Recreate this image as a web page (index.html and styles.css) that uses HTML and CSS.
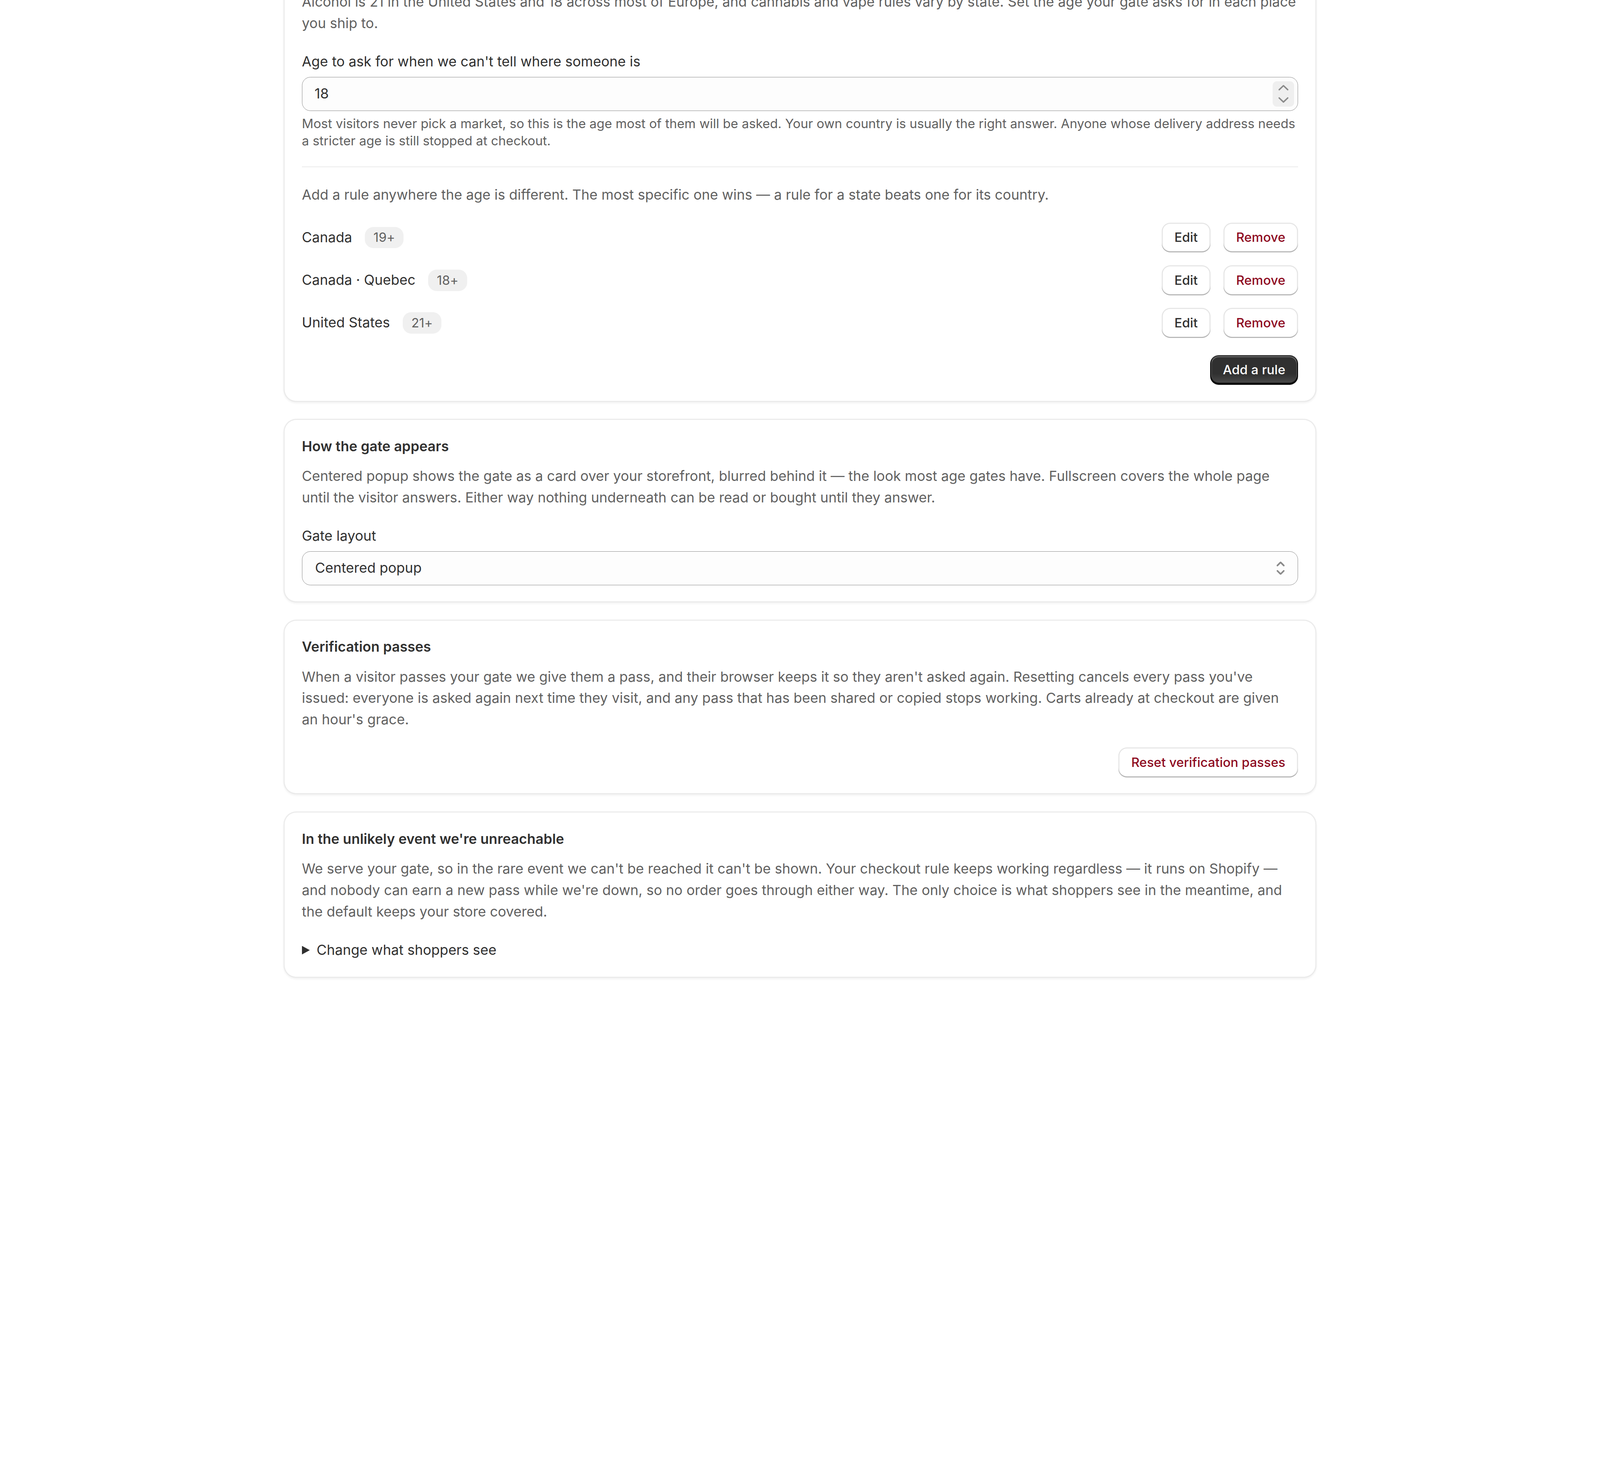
FILE: index.html
```html
<!DOCTYPE html>
<html lang="en">
<head>
<meta charset="UTF-8">
<meta name="viewport" content="width=device-width, initial-scale=1.0">
<title>Age gate settings</title>
<link rel="stylesheet" href="styles.css">
</head>
<body>

<div class="page">

  <div class="card">
    <p class="subdued">Alcohol is 21 in the United States and 18 across most of Europe, and cannabis and vape rules vary by state. Set the age your gate asks for in each place you ship to.</p>

    <div class="field">
      <label for="fallbackAge">Age to ask for when we can't tell where someone is</label>
      <div class="number-field">
        <input type="text" id="fallbackAge" value="18">
        <div class="spinner">
          <span class="spin-btn">
            <svg width="10" height="6" viewBox="0 0 10 6"><polyline points="1,5 5,1.2 9,5" fill="none" stroke="#8a8a8a" stroke-width="1.3" stroke-linecap="round" stroke-linejoin="round"/></svg>
          </span>
          <span class="spin-btn">
            <svg width="10" height="6" viewBox="0 0 10 6"><polyline points="1,1 5,4.8 9,1" fill="none" stroke="#8a8a8a" stroke-width="1.3" stroke-linecap="round" stroke-linejoin="round"/></svg>
          </span>
        </div>
      </div>
      <p class="help">Most visitors never pick a market, so this is the age most of them will be asked. Your own country is usually the right answer. Anyone whose delivery address needs a stricter age is still stopped at checkout.</p>
    </div>

    <hr class="divider">

    <p class="subdued">Add a rule anywhere the age is different. The most specific one wins — a rule for a state beats one for its country.</p>

    <div class="rules">
      <div class="rule">
        <div class="rule-name">
          <span>Canada</span>
          <span class="badge">19+</span>
        </div>
        <div class="rule-actions">
          <button class="btn">Edit</button>
          <button class="btn btn-critical">Remove</button>
        </div>
      </div>
      <div class="rule">
        <div class="rule-name">
          <span>Canada · Quebec</span>
          <span class="badge">18+</span>
        </div>
        <div class="rule-actions">
          <button class="btn">Edit</button>
          <button class="btn btn-critical">Remove</button>
        </div>
      </div>
      <div class="rule">
        <div class="rule-name">
          <span>United States</span>
          <span class="badge">21+</span>
        </div>
        <div class="rule-actions">
          <button class="btn">Edit</button>
          <button class="btn btn-critical">Remove</button>
        </div>
      </div>
    </div>

    <div class="actions">
      <button class="btn btn-primary">Add a rule</button>
    </div>
  </div>

  <div class="card">
    <div class="section-head">
      <h2>How the gate appears</h2>
      <p class="subdued">Centered popup shows the gate as a card over your storefront, blurred behind it — the look most age gates have. Fullscreen covers the whole page until the visitor answers. Either way nothing underneath can be read or bought until they answer.</p>
    </div>

    <div class="field">
      <label for="gateLayout">Gate layout</label>
      <div class="select">
        <select id="gateLayout">
          <option>Centered popup</option>
          <option>Fullscreen</option>
        </select>
        <svg class="select-icon" width="20" height="20" viewBox="0 0 20 20"><path fill="#8a8a8a" d="M10.884 4.323a1.25 1.25 0 0 0-1.768 0l-2.646 2.647a.75.75 0 0 0 1.06 1.06l2.47-2.47 2.47 2.47a.75.75 0 1 0 1.06-1.06l-2.646-2.647Z"/><path fill="#8a8a8a" d="m13.53 13.03-2.646 2.647a1.25 1.25 0 0 1-1.768 0l-2.646-2.647a.75.75 0 0 1 1.06-1.06l2.47 2.47 2.47-2.47a.75.75 0 0 1 1.06 1.06Z"/></svg>
      </div>
    </div>
  </div>

  <div class="card">
    <div class="section-head">
      <h2>Verification passes</h2>
      <p class="subdued">When a visitor passes your gate we give them a pass, and their browser keeps it so they aren't asked again. Resetting cancels every pass you've issued: everyone is asked again next time they visit, and any pass that has been shared or copied stops working. Carts already at checkout are given an hour's grace.</p>
    </div>

    <div class="actions">
      <button class="btn btn-critical">Reset verification passes</button>
    </div>
  </div>

  <div class="card">
    <div class="section-head">
      <h2>In the unlikely event we're unreachable</h2>
      <p class="subdued">We serve your gate, so in the rare event we can't be reached it can't be shown. Your checkout rule keeps working regardless — it runs on Shopify — and nobody can earn a new pass while we're down, so no order goes through either way. The only choice is what shoppers see in the meantime, and the default keeps your store covered.</p>
    </div>

    <details class="fallback">
      <summary>Change what shoppers see</summary>
    </details>
  </div>

</div>

</body>
</html>
```

FILE: styles.css
```css
body {
  margin: 0;
  zoom: 2.7307;
  background-color: #fff;
  font-family: "Inter", "Noto Sans", sans-serif;
  font-size: 13px;
  line-height: 20px;
  letter-spacing: 0.02px;
  color: #303030;
}

.page {
  width: 968px;
  margin: -24px auto 40px;
  display: flex;
  flex-direction: column;
  gap: 16px;
}

.card {
  background-color: #fff;
  border-radius: 12px;
  padding: 16px 17px;
  display: flex;
  flex-direction: column;
  gap: 16px;
  box-shadow: inset 0 0 0 1px #ebebeb, inset 0 -1px 0 0 #e3e3e3, 0 1px 2px rgba(26, 26, 26, 0.06);
}

p {
  margin: 0;
}

h2 {
  margin: 0;
  font-size: 13px;
  line-height: 20px;
  font-weight: 600;
  color: #303030;
}

.subdued {
  color: #616161;
}

.section-head {
  display: flex;
  flex-direction: column;
  gap: 8px;
}

.field {
  display: flex;
  flex-direction: column;
  gap: 4px;
}

.field label {
  color: #303030;
}

.help {
  font-size: 12px;
  line-height: 16px;
  color: #616161;
}

.number-field,
.select {
  display: flex;
  align-items: center;
  height: 32px;
  box-sizing: border-box;
  border: 0.66px solid #8a8a8a;
  border-radius: 8px;
  background-color: #fdfdfd;
}

.number-field {
  padding: 0 3.5px 0 11.5px;
}

.number-field input {
  flex: 1;
  border: none;
  outline: none;
  background: transparent;
  padding: 0;
  font: inherit;
  letter-spacing: inherit;
  color: #303030;
}

.spinner {
  width: 20px;
  height: 24px;
  border-radius: 4px;
  background-color: #efefef;
  display: flex;
  flex-direction: column;
}

.spin-btn {
  flex: 1;
  display: flex;
  align-items: center;
  justify-content: center;
}

.spin-btn svg {
  display: block;
}

.select {
  padding: 0 6px 0 12px;
}

.select select {
  flex: 1;
  appearance: none;
  border: none;
  outline: none;
  background: transparent;
  padding: 0;
  font: inherit;
  letter-spacing: inherit;
  color: #303030;
}

.select-icon {
  display: block;
}

.divider {
  margin: 0;
  border: none;
  border-top: 1px solid #ebebeb;
}

.rules {
  display: flex;
  flex-direction: column;
  gap: 12px;
}

.rule {
  display: flex;
  align-items: center;
  justify-content: space-between;
  height: 28px;
}

.rule-name {
  display: flex;
  align-items: center;
  gap: 12px;
}

.badge {
  display: inline-flex;
  align-items: center;
  height: 20px;
  padding: 0 8px;
  border-radius: 8px;
  background-color: #f0f0f0;
  color: #616161;
  font-size: 12px;
  line-height: 16px;
}

.rule-actions {
  display: flex;
  gap: 12px;
}

.actions {
  display: flex;
  justify-content: flex-end;
}

.btn {
  height: 28px;
  padding: 0 12px;
  border: none;
  border-radius: 8px;
  background-color: #fff;
  color: #303030;
  font-family: inherit;
  font-size: 12px;
  line-height: 16px;
  font-weight: 550;
  letter-spacing: inherit;
  cursor: pointer;
  box-shadow: inset 0 -1px 0 0 #b5b5b5, inset 0 0 0 1px rgba(0, 0, 0, 0.1), inset 0 0.5px 0 1.5px #fff;
}

.btn-critical {
  color: #8e0b21;
}

.btn-primary {
  color: #fff;
  background: linear-gradient(180deg, rgba(48, 48, 48, 0) 63%, rgba(255, 255, 255, 0.15) 100%), #303030;
  box-shadow: inset 0 -1px 0 1px rgba(0, 0, 0, 0.8), inset 0 0 0 1px #303030, inset 0 0.5px 0 1.5px rgba(255, 255, 255, 0.25);
}

.fallback summary {
  list-style: none;
  display: flex;
  align-items: center;
  cursor: pointer;
  color: #303030;
}

.fallback summary::-webkit-details-marker {
  display: none;
}

.fallback summary::before {
  content: "";
  width: 0;
  height: 0;
  margin-right: 6.5px;
  border-left: 7.5px solid #303030;
  border-top: 4.25px solid transparent;
  border-bottom: 4.25px solid transparent;
}
```
